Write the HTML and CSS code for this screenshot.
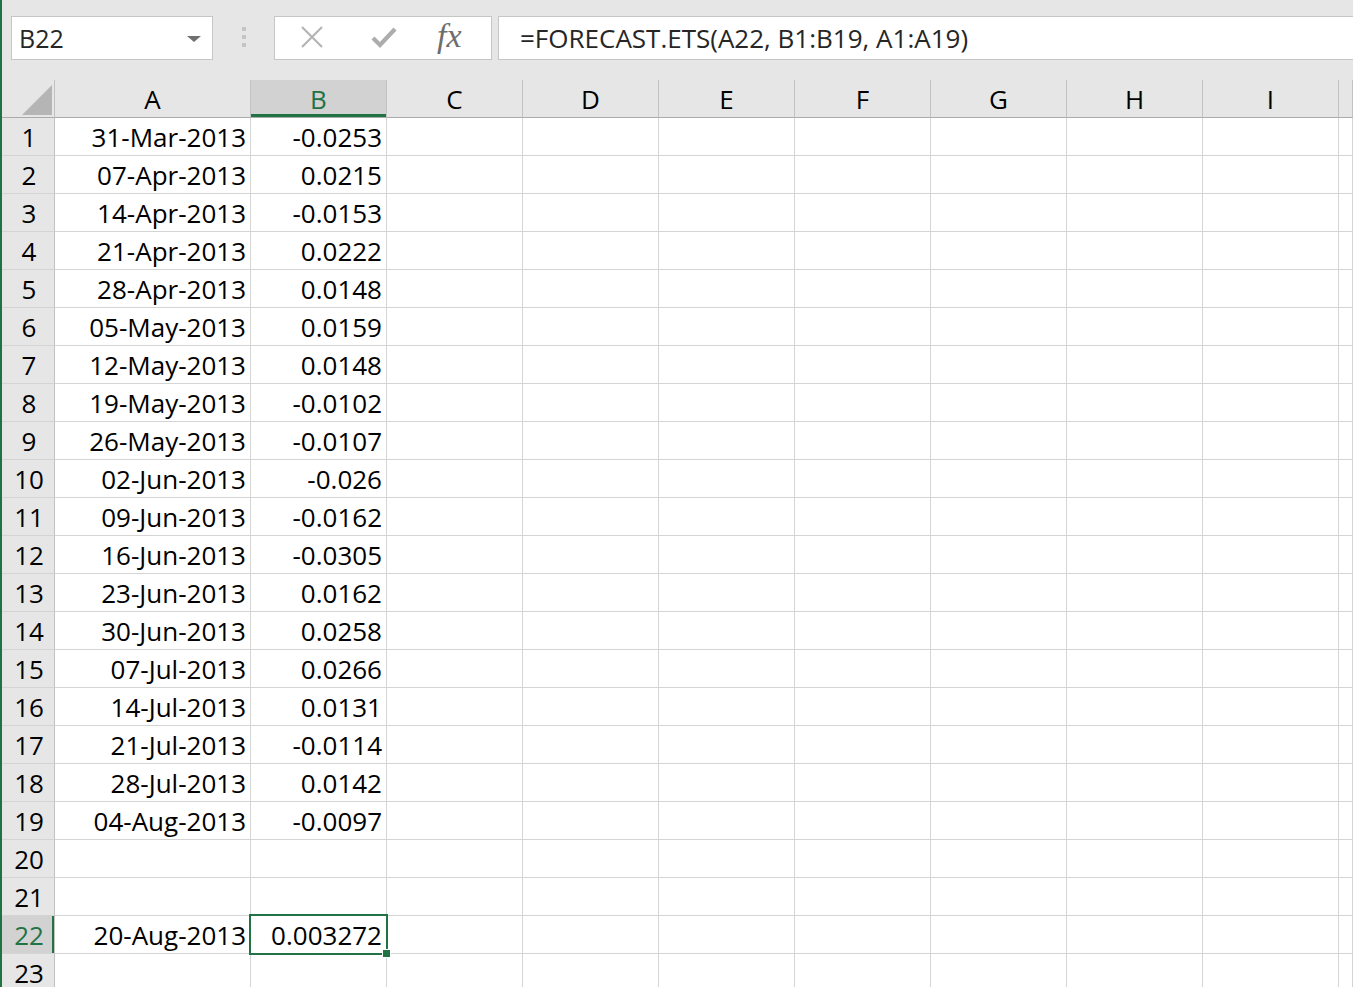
FILE: index.html
```html
<!DOCTYPE html>
<html lang="en">
<head>
    <meta charset="UTF-8">
    <meta name="viewport" content="width=device-width, initial-scale=1.0">
    <title>FORECAST.ETS</title>
    <link rel="stylesheet" href="styles.css">
</head>
<body>

    <div class="app">
        <div class="toolbar">
            <div class="name-box">
                <span>B22</span>
                <span class="caret"></span>
            </div>
            <div class="grip">
                <span></span><span></span><span></span>
            </div>
            <div class="actions">
                <svg class="icon" width="24" height="22" viewBox="0 0 24 22">
                    <path d="M2 1 L22 21 M22 1 L2 21" stroke="#b4b4b4" stroke-width="2.2" fill="none"/>
                </svg>
                <svg class="icon" width="26" height="22" viewBox="0 0 26 22">
                    <path d="M2 12 L9 19 L24 3" stroke="#adadad" stroke-width="4.2" fill="none"/>
                </svg>
                <span class="fx">fx</span>
            </div>
            <div class="formula">=FORECAST.ETS(A22, B1:B19, A1:A19)</div>
        </div>

        <div class="sheet" id="sheet">
            <div class="corner"><span class="tri"></span></div>
        </div>
    </div>

    <script>
        const sheet = document.getElementById('sheet');
        const cols = ['A', 'B', 'C', 'D', 'E', 'F', 'G', 'H', 'I', ''];
        const data = [
            ['31-Mar-2013', '-0.0253'],
            ['07-Apr-2013', '0.0215'],
            ['14-Apr-2013', '-0.0153'],
            ['21-Apr-2013', '0.0222'],
            ['28-Apr-2013', '0.0148'],
            ['05-May-2013', '0.0159'],
            ['12-May-2013', '0.0148'],
            ['19-May-2013', '-0.0102'],
            ['26-May-2013', '-0.0107'],
            ['02-Jun-2013', '-0.026'],
            ['09-Jun-2013', '-0.0162'],
            ['16-Jun-2013', '-0.0305'],
            ['23-Jun-2013', '0.0162'],
            ['30-Jun-2013', '0.0258'],
            ['07-Jul-2013', '0.0266'],
            ['14-Jul-2013', '0.0131'],
            ['21-Jul-2013', '-0.0114'],
            ['28-Jul-2013', '0.0142'],
            ['04-Aug-2013', '-0.0097'],
            [],
            [],
            ['20-Aug-2013', '0.003272'],
            []
        ];

        function cell(cls, text) {
            const div = document.createElement('div');
            div.className = cls;
            div.textContent = text || '';
            sheet.appendChild(div);
            return div;
        }

        cols.forEach(c => cell(c === 'B' ? 'col-head active' : 'col-head', c));

        data.forEach((row, i) => {
            const n = i + 1;
            cell(n === 22 ? 'row-head active' : 'row-head', n);
            cols.forEach((c, j) => {
                const div = cell('cell', row[j]);
                if (n === 22 && c === 'B') {
                    div.classList.add('selected');
                    const handle = document.createElement('span');
                    handle.className = 'handle';
                    div.appendChild(handle);
                }
            });
        });
    </script>

</body>
</html>
```

FILE: styles.css
```css
body {
    margin: 0;
    height: 100vh;
    overflow: hidden;
    background-color: #e6e6e6;
    font-family: "Open Sans", "Noto Sans", sans-serif;
    color: #000;
}

.app {
    height: 100vh;
    border-left: 2px solid #217346;
}

.toolbar {
    display: flex;
    align-items: center;
    padding: 16px 0 0 9px;
    height: 44px;
}

.name-box {
    box-sizing: border-box;
    display: flex;
    align-items: center;
    justify-content: space-between;
    width: 202px;
    height: 44px;
    padding: 0 11px 0 7px;
    background-color: #fff;
    border: 1px solid #c6c6c6;
    font-size: 25px;
    color: #262626;
}

.caret {
    width: 0;
    height: 0;
    border-left: 7px solid transparent;
    border-right: 7px solid transparent;
    border-top: 6px solid #707070;
    margin-top: 2px;
}

.grip {
    display: flex;
    flex-direction: column;
    gap: 4px;
    width: 61px;
    align-items: center;
    padding-left: 1px;
    box-sizing: border-box;
    margin-top: -2px;
}

.grip span {
    width: 4px;
    height: 4px;
    background-color: #c4c4c4;
}

.actions {
    box-sizing: border-box;
    display: flex;
    align-items: center;
    width: 218px;
    height: 44px;
    padding: 0 0 0 25px;
    background-color: #fff;
    border: 1px solid #c6c6c6;
}

.actions .icon {
    display: block;
    margin-top: -2px;
}

.actions .icon + .icon {
    margin-left: 47px;
}

.fx {
    margin-left: 40px;
    font-family: "Liberation Serif", "DejaVu Serif", serif;
    font-style: italic;
    font-size: 34px;
    color: #6e6e6e;
    margin-top: -5px;
}

.formula {
    box-sizing: border-box;
    flex: 1;
    height: 44px;
    margin-left: 6px;
    padding-left: 21px;
    display: flex;
    align-items: center;
    background-color: #fff;
    border: 1px solid #c6c6c6;
    border-right: none;
    font-size: 26px;
    color: #262626;
}

.sheet {
    display: grid;
    grid-template-columns: 53px 196px repeat(8, 136px) 1fr;
    grid-auto-rows: 38px;
    margin-top: 20px;
    font-size: 26px;
}

.sheet > div {
    box-sizing: border-box;
    display: flex;
    align-items: center;
    white-space: nowrap;
}

.corner {
    position: relative;
    border-right: 1px solid #c2c2c2;
    border-bottom: 1px solid #ababab;
}

.tri {
    position: absolute;
    right: 2px;
    bottom: 2px;
    width: 0;
    height: 0;
    border-left: 30px solid transparent;
    border-bottom: 30px solid #b5b5b5;
}

.col-head {
    justify-content: center;
    border-right: 1px solid #c2c2c2;
    border-bottom: 1px solid #ababab;
}

.col-head.active {
    background-color: #d2d2d2;
    color: #217346;
    box-shadow: inset 0 -3px 0 #217346;
}

.row-head {
    justify-content: center;
    padding-left: 2px;
    border-right: 1px solid #c2c2c2;
    border-bottom: 1px solid #d4d4d4;
}

.row-head.active {
    background-color: #d2d2d2;
    color: #217346;
    box-shadow: inset -2px 0 0 #217346;
}

.cell {
    position: relative;
    justify-content: flex-end;
    padding-right: 4px;
    background-color: #fff;
    border-right: 1px solid #d4d4d4;
    border-bottom: 1px solid #d4d4d4;
}

.cell.selected {
    z-index: 2;
}

.cell.selected::after {
    content: "";
    position: absolute;
    top: -2px;
    left: -2px;
    right: -2px;
    bottom: -2px;
    border: 2px solid #217346;
}

.handle {
    position: absolute;
    right: -5px;
    bottom: -5px;
    width: 7px;
    height: 7px;
    background-color: #217346;
    border: 1px solid #fff;
    z-index: 1;
}
```
